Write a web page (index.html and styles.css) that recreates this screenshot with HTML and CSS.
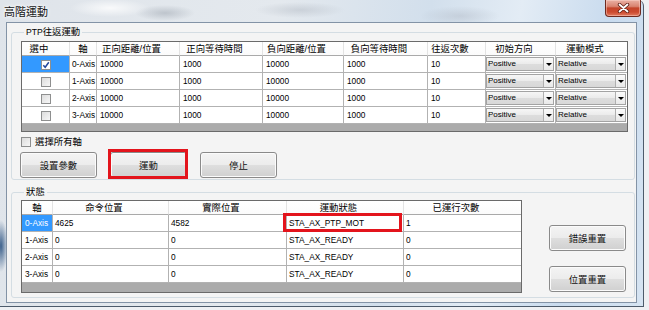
FILE: index.html
```html
<!DOCTYPE html>
<html lang="zh-Hant">
<head>
<meta charset="utf-8">
<title>高階運動</title>
<link rel="stylesheet" href="styles.css">
</head>
<body>
<div class="win">
  <div class="titlebar">
    <span class="title">高階運動</span>
    <span class="close"><svg width="13" height="10" viewBox="0 0 13 10"><path d="M2.5 1.5 L10.5 8.5 M10.5 1.5 L2.5 8.5" stroke="#5a1d14" stroke-width="3.4" stroke-linecap="round" fill="none"/><path d="M2.5 1.5 L10.5 8.5 M10.5 1.5 L2.5 8.5" stroke="#ffffff" stroke-width="1.8" stroke-linecap="round" fill="none"/></svg></span>
  </div>
  <div class="client">
    <fieldset class="grp grp1">
      <legend><span class="lat">PTP</span>往返運動</legend>
      <div class="grid grid1">
        <table>
          <colgroup>
            <col class="w48"><col class="w27"><col class="w83"><col class="w83"><col class="w81"><col class="w84"><col class="w58"><col class="w70"><col class="w71">
          </colgroup>
          <tr class="hd">
            <th>選中</th><th class="np">軸</th><th>正向距離/位置</th><th>正向等待時間</th><th>負向距離/位置</th><th>負向等待時間</th><th>往返次數</th><th>初始方向</th><th class="last">運動模式</th>
          </tr>
          <tr>
            <td class="sel ctr"><span class="cb on"><svg width="8" height="8" viewBox="0 0 8 8"><path d="M1.3 4.2 L3.2 6.3 L6.8 1.2" stroke="#23479c" stroke-width="1.5" fill="none"/></svg></span></td>
            <td class="ax">0-Axis</td><td>10000</td><td>1000</td><td>10000</td><td>1000</td><td>10</td>
            <td class="cc"><div class="cmb"><span>Positive</span><i></i></div></td>
            <td class="cc last"><div class="cmb"><span>Relative</span><i></i></div></td>
          </tr>
          <tr>
            <td class="ctr"><span class="cb"></span></td>
            <td class="ax">1-Axis</td><td>10000</td><td>1000</td><td>10000</td><td>1000</td><td>10</td>
            <td class="cc"><div class="cmb"><span>Positive</span><i></i></div></td>
            <td class="cc last"><div class="cmb"><span>Relative</span><i></i></div></td>
          </tr>
          <tr>
            <td class="ctr"><span class="cb"></span></td>
            <td class="ax">2-Axis</td><td>10000</td><td>1000</td><td>10000</td><td>1000</td><td>10</td>
            <td class="cc"><div class="cmb"><span>Positive</span><i></i></div></td>
            <td class="cc last"><div class="cmb"><span>Relative</span><i></i></div></td>
          </tr>
          <tr>
            <td class="ctr"><span class="cb"></span></td>
            <td class="ax">3-Axis</td><td>10000</td><td>1000</td><td>10000</td><td>1000</td><td>10</td>
            <td class="cc"><div class="cmb"><span>Positive</span><i></i></div></td>
            <td class="cc last"><div class="cmb"><span>Relative</span><i></i></div></td>
          </tr>
        </table>
      </div>
      <label class="all"><span class="cb"></span><span>選擇所有軸</span></label>
      <div class="btns">
        <button class="btn">設置參數</button>
        <button class="btn marked">運動</button>
        <button class="btn">停止</button>
      </div>
    </fieldset>
    <fieldset class="grp grp2">
      <legend>狀態</legend>
      <div class="row2">
        <div class="grid grid2">
          <table>
            <colgroup>
              <col class="w31"><col class="w116"><col class="w118"><col class="w117"><col class="w117">
            </colgroup>
            <tr class="hd">
              <th class="np">軸</th><th>命令位置</th><th>實際位置</th><th>運動狀態</th><th class="last">已運行次數</th>
            </tr>
            <tr>
              <td class="sel rh">0-Axis</td><td>4625</td><td>4582</td><td class="flag">STA_AX_PTP_MOT</td><td class="last">1</td>
            </tr>
            <tr>
              <td class="rh">1-Axis</td><td>0</td><td>0</td><td>STA_AX_READY</td><td class="last">0</td>
            </tr>
            <tr>
              <td class="rh">2-Axis</td><td>0</td><td>0</td><td>STA_AX_READY</td><td class="last">0</td>
            </tr>
            <tr>
              <td class="rh">3-Axis</td><td>0</td><td>0</td><td>STA_AX_READY</td><td class="last">0</td>
            </tr>
          </table>
        </div>
        <div class="side">
          <button class="btn">錯誤重置</button>
          <button class="btn">位置重置</button>
        </div>
      </div>
    </fieldset>
  </div>
</div>
</body>
</html>
```

FILE: styles.css
```css
* { box-sizing: border-box; }
html, body { margin: 0; padding: 0; }
body {
  width: 649px;
  height: 310px;
  overflow: hidden;
  background: #eef0f3;
  font-family: "Liberation Sans", "Noto Sans CJK TC", sans-serif;
  font-size: 8.3px;
  color: #000;
}

.win {
  width: 644px;
  height: 307px;
  border-right: 1px solid #4d5b6b;
  border-bottom: 1px solid #4d5b6b;
  border-radius: 0 6px 0 0;
  display: flex;
  flex-direction: column;
  background:
    radial-gradient(ellipse 7px 26px at 1px 246px, #3d618c 0%, rgba(61,97,140,0) 100%),
    radial-gradient(ellipse 40px 9px at 110px 8px, rgba(255,255,255,0.8), rgba(255,255,255,0)),
    radial-gradient(ellipse 30px 8px at 165px 13px, rgba(160,168,178,0.55), rgba(160,168,178,0)),
    radial-gradient(ellipse 45px 8px at 300px 10px, rgba(175,182,192,0.45), rgba(175,182,192,0)),
    radial-gradient(ellipse 40px 10px at 460px 16px, rgba(170,178,190,0.4), rgba(170,178,190,0)),
    linear-gradient(100deg, #dfe4ea 0%, #e4e9ee 40%, #d2dfec 62%, #e3ecf5 75%, #c9dbee 88%, #d6e4f2 100%);
}

.titlebar {
  height: 22px;
  flex: none;
  display: flex;
  justify-content: space-between;
  align-items: flex-start;
  padding: 0 2px 0 4px;
}
.title {
  font-size: 11px;
  line-height: 11px;
  margin-top: 7px;
  color: #151515;
  text-shadow: 0 0 3px #fff, 0 0 5px #fff;
}
.close {
  width: 36px;
  height: 17px;
  display: flex;
  align-items: center;
  justify-content: center;
  border: 1px solid #6e2a1f;
  border-top: none;
  border-radius: 0 0 4px 4px;
  background: linear-gradient(#eab1a4 0%, #d98471 40%, #c4452b 50%, #cc4a2f 75%, #e27a5e 100%);
  box-shadow: inset 0 0 0 1px rgba(255,220,210,0.45);
}

.client {
  margin: 0 6px;
  height: 281px;
  flex: none;
  border: 1px solid #8393a6;
  background: #f4f4f4;
  display: flex;
  flex-direction: column;
  padding: 0 1px 0 4px;
}

.grp {
  margin: 0;
  min-width: 0;
  border: 1px solid #d4dde3;
  border-radius: 3px;
  padding: 3px 6px 1px 9px;
}
.grp legend {
  padding: 0 2px;
  margin-left: 3px;
  font-size: 9.4px;
  line-height: 12px;
}
.lat { font-size: 8.6px; }
.grp1 { margin-top: 3px; }
.grp2 { margin-top: 6px; padding-top: 2px; padding-bottom: 4px; }

.grid {
  border: 1px solid #6a6a6a;
  background: #ababab;
}
.grid1 { width: 607px; height: 91px; }
.grid2 { width: 501px; height: 93px; flex: none; }

.grid table {
  border-collapse: separate;
  border-spacing: 0;
  table-layout: fixed;
  width: 100%;
}
.w27 { width: 27px; } .w31 { width: 31px; } .w48 { width: 48px; }
.w58 { width: 58px; } .w70 { width: 70px; } .w71 { width: 71px; }
.w81 { width: 81px; } .w83 { width: 83px; } .w84 { width: 84px; }
.w116 { width: 116px; } .w117 { width: 117px; } .w118 { width: 118px; }

.grid tr { height: 17px; }
.grid tr.hd { height: 14px; }

.grid th {
  font-weight: normal;
  font-size: 9.4px;
  line-height: 13px;
  padding: 0 13px 0 0;
  text-align: center;
  background: linear-gradient(#ffffff, #fbfbfb);
  border-right: 1px solid #e3e3e3;
  border-bottom: 1px solid #a9a9a9;
  white-space: nowrap;
  overflow: hidden;
}
.grid th.np { padding: 0; }
.grid td {
  padding: 0 0 0 3px;
  line-height: 16px;
  background: #fff;
  border-right: 1px solid #b2b2b2;
  border-bottom: 1px solid #b2b2b2;
  white-space: nowrap;
  overflow: hidden;
  vertical-align: middle;
}
.grid .last { border-right: none; }
.grid td.ax { padding-left: 2px; }
.grid2 td { padding-left: 2px; }
.grid2 td.rh { padding-left: 3px; }
.grid td.ctr { padding: 0; text-align: center; }
.grid td.sel { background: #3399ff; color: #fff; }
.grid td.cc { padding: 1px 1px 0 0; vertical-align: top; }

.cb {
  display: inline-block;
  width: 10px;
  height: 10px;
  border: 1px solid #8e8f8f;
  background: linear-gradient(135deg, #dcdcdc, #f7f7f7);
  vertical-align: middle;
  position: relative;
}
.cb.on {
  background: #fff;
}
.cb.on svg { position: absolute; left: 0; top: 0; }

.cmb {
  display: flex;
  height: 14px;
  border: 1px solid #a3a3a3;
  background: linear-gradient(#f6f6f6 0%, #ebebeb 50%, #dddddd 51%, #d8d8d8 100%);
  font-family: "Liberation Sans Narrow", "Liberation Sans", sans-serif;
  font-size: 8px;
}
.cmb span { flex: 1; padding-left: 1px; line-height: 12px; }
.cmb i {
  width: 10px;
  flex: none;
  border-left: 1px solid #b0b0b0;
  background: linear-gradient(#fbfbfb, #e9e9e9);
  display: flex;
  align-items: center;
  justify-content: center;
}
.cmb i::before {
  content: "";
  border-left: 3px solid transparent;
  border-right: 3px solid transparent;
  border-top: 3px solid #000;
}

.all {
  display: flex;
  align-items: center;
  gap: 4px;
  margin-top: 5px;
  height: 10px;
  font-size: 9.4px;
  line-height: 10px;
}

.btns {
  display: flex;
  gap: 13px;
  margin: 5px 0 0 -1px;
}
.btn {
  width: 77px;
  height: 26px;
  padding: 0;
  border: 1px solid #8a8a8a;
  border-radius: 3px;
  background: linear-gradient(#f4f4f4 0%, #ececec 48%, #dedede 52%, #d0d0d0 100%);
  box-shadow: inset 0 0 0 1px #fbfbfb;
  font-family: "Liberation Sans", "Noto Sans CJK TC", sans-serif;
  font-size: 9.4px;
  color: #111;
}
.marked { position: relative; }
.marked::after {
  content: "";
  position: absolute;
  left: -3px;
  right: -2px;
  top: -4px;
  bottom: -2px;
  border: 3px solid #e3141c;
}

.row2 { display: flex; }
.side {
  display: flex;
  flex-direction: column;
  gap: 15px;
  margin-left: 27px;
  padding-top: 25px;
}

.grid td.flag { position: relative; overflow: visible; }
.grid td.flag::after {
  content: "";
  position: absolute;
  left: -4px;
  right: 1px;
  top: -2px;
  bottom: -1px;
  border: 3px solid #e3141c;
}
```
